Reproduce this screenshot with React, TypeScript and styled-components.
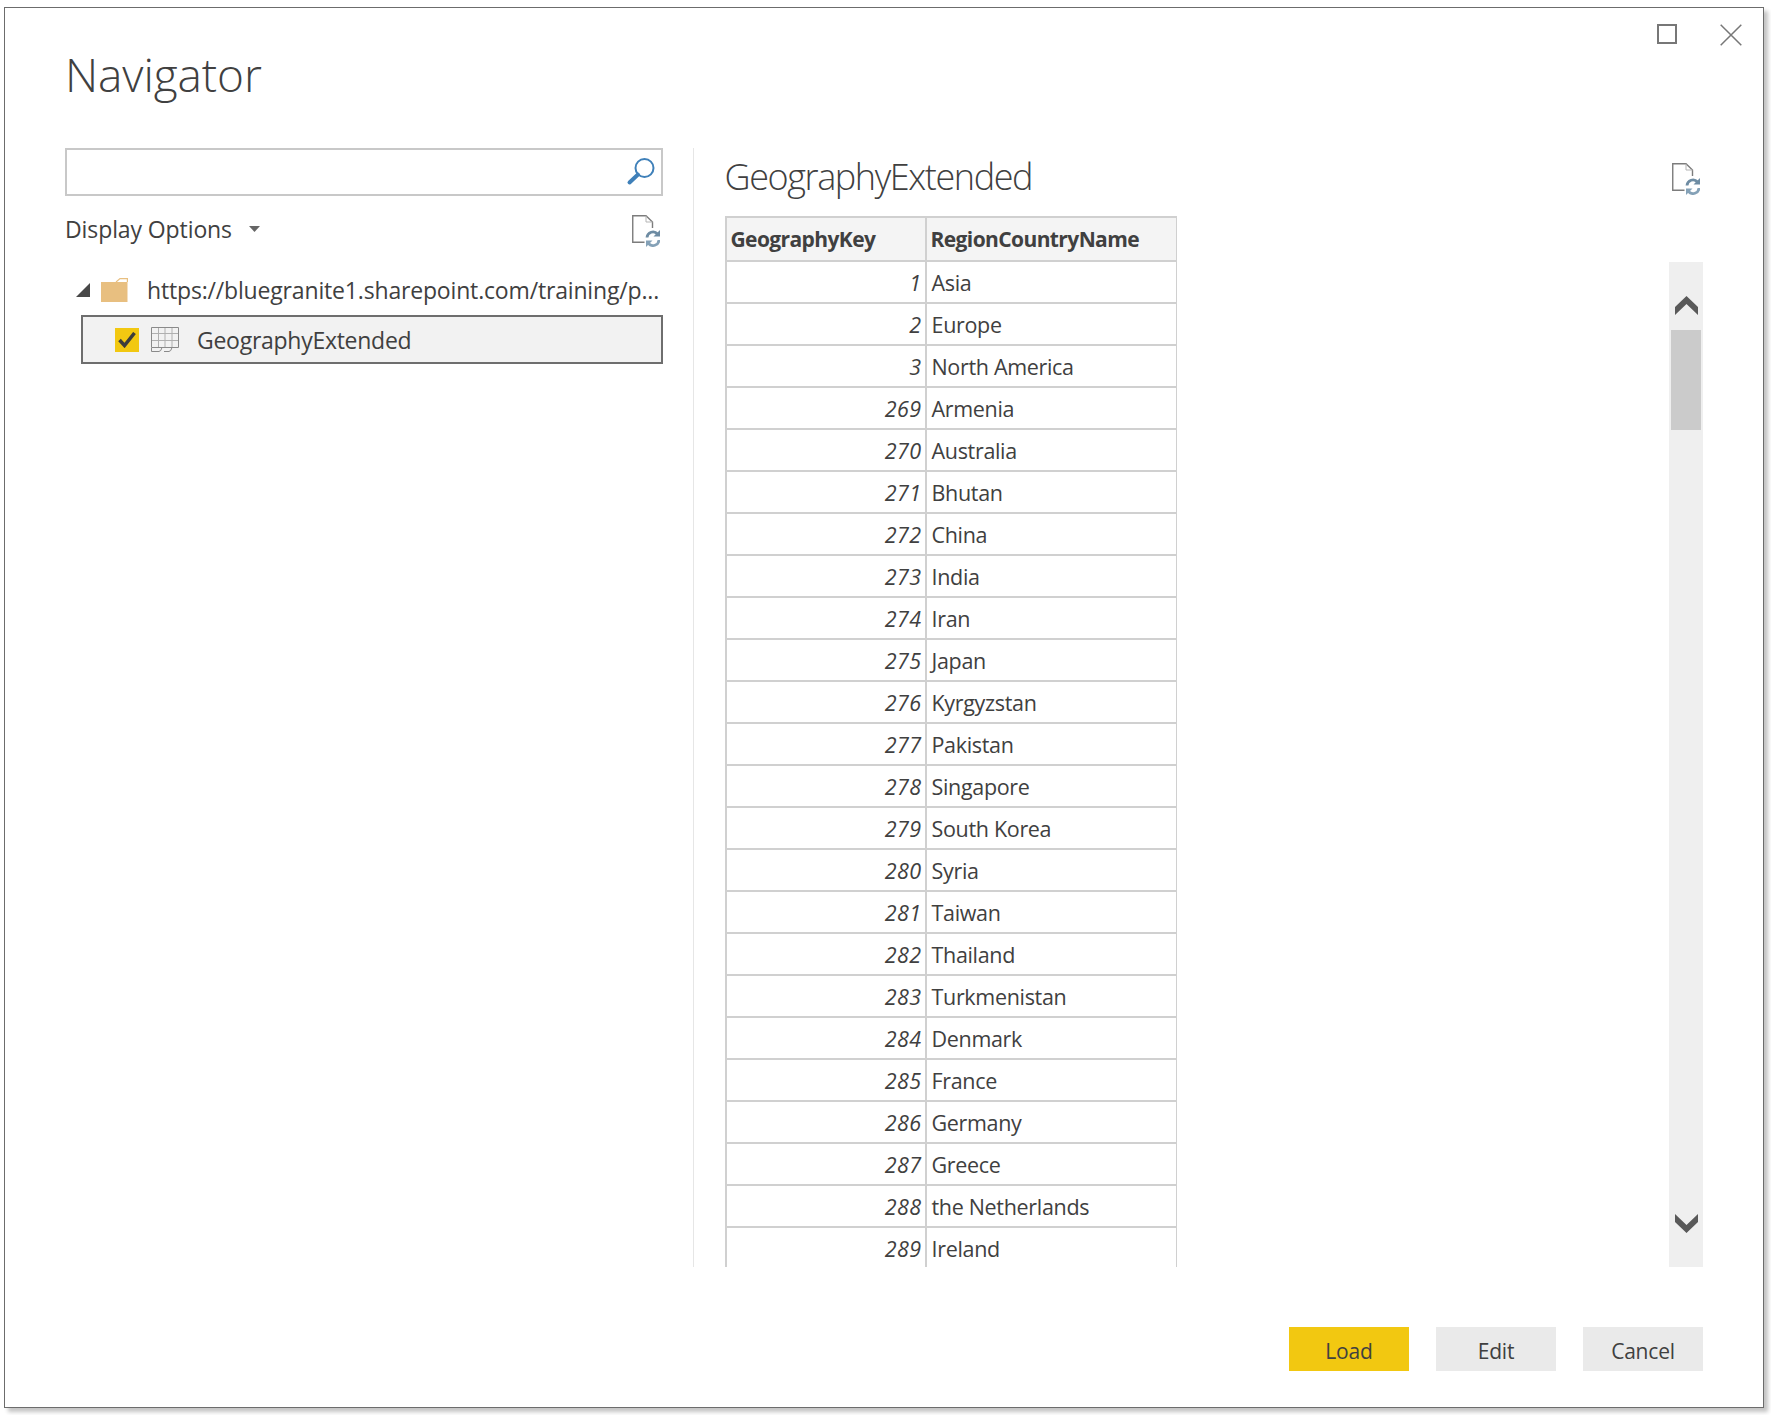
import React from 'react'
import styled, { createGlobalStyle } from 'styled-components'

const GlobalStyles = createGlobalStyle`
  html, body {
    margin: 0;
    padding: 0;
    background: #fff;
  }

  body {
    color: #404040;
    font-family: "Open Sans", "Noto Sans", "Liberation Sans", sans-serif;
  }
`

const Page = styled.div`
  box-sizing: border-box;
  height: 1415px;
  padding: 7px 0 0 4px;
  width: 1771px;
`

const Window = styled.div`
  background: #fff;
  border: 1.5px solid #6c6c6c;
  box-shadow: 4px 4px 4px #c4c4c4;
  box-sizing: border-box;
  display: flex;
  flex-direction: column;
  height: 1401px;
  padding: 0 60px;
  width: 1760px;
`

const Header = styled.header`
  display: flex;
  flex: none;
  height: 139.5px;
  justify-content: space-between;
  margin-right: -60px;
`

const Title = styled.h1`
  font-size: 46px;
  font-weight: 300;
  letter-spacing: -0.1px;
  line-height: 62px;
  margin: 35px 0 0;
`

const WindowControls = styled.div`
  align-items: flex-start;
  column-gap: 43px;
  display: flex;
  padding: 16px 21px 0 0;
`

const Body = styled.div`
  display: grid;
  flex: none;
  grid-template-columns: 598px minmax(0, 1fr);
  grid-template-rows: minmax(0, 1fr);
  height: 1119px;
`

const LeftPanel = styled.section`
  display: flex;
  flex-direction: column;
`

const SearchBox = styled.div`
  align-items: center;
  border: 2.5px solid #c8c8c8;
  box-sizing: border-box;
  display: flex;
  flex: none;
  height: 48px;
  justify-content: flex-end;
  padding-right: 5px;
`

const OptionsRow = styled.div`
  align-items: center;
  display: flex;
  height: 52px;
  justify-content: space-between;
  margin-top: 9px;
  padding-right: 3px;
`

const DisplayOptions = styled.div`
  align-items: center;
  column-gap: 17px;
  display: flex;
  font-size: 23px;
  letter-spacing: -0.1px;
  padding-bottom: 4px;
`

const TreeRoot = styled.div`
  align-items: center;
  column-gap: 11px;
  display: flex;
  font-size: 23px;
  height: 44px;
  letter-spacing: -0.17px;
  margin-top: 11.5px;
  padding-left: 11px;
  white-space: nowrap;
`

const FolderLabel = styled.span`
  margin-left: 8px;
`

const TreeItem = styled.div`
  align-items: center;
  background: #f2f2f2;
  border: 2.5px solid #6e6e6e;
  box-sizing: border-box;
  display: flex;
  font-size: 23px;
  height: 49px;
  letter-spacing: -0.27px;
  margin: 3px 0 0 16px;
  padding-left: 31.5px;
`

const CheckBox = styled.span`
  align-items: center;
  background: #f2c811;
  display: flex;
  flex: none;
  height: 24px;
  justify-content: center;
  width: 24px;
`

const ItemIcon = styled.span`
  display: flex;
  margin-left: 12.5px;
`

const ItemLabel = styled.span`
  margin-left: 18px;
`

const RightPanel = styled.section`
  border-left: 1.5px solid #e6e6e6;
  display: flex;
  flex-direction: column;
  margin-left: 30px;
  min-height: 0;
  padding-left: 30.5px;
`

const PreviewHeader = styled.div`
  align-items: flex-start;
  display: flex;
  flex: none;
  height: 68px;
  justify-content: space-between;
  padding-right: 3px;
`

const PreviewTitle = styled.h2`
  font-size: 36px;
  font-weight: 300;
  letter-spacing: -1.4px;
  line-height: 50px;
  margin: 4px 0 0;
`

const RefreshSlot = styled.div`
  padding-top: 15px;
`

const PreviewBody = styled.div`
  display: flex;
  flex: 1;
  justify-content: space-between;
  min-height: 0;
`

const TableViewport = styled.div`
  height: 100%;
  overflow: hidden;
  width: 452px;
`

const DataTable = styled.table`
  border: 2px solid #d0d0d0;
  border-collapse: collapse;
  font-size: 21.5px;
  table-layout: fixed;
  width: 451px;
`

const HeadCell = styled.th`
  background: #f4f4f4;
  border: 2px solid #d0d0d0;
  font-size: 21px;
  font-weight: 700;
  height: 42px;
  letter-spacing: -0.6px;
  overflow: hidden;
  padding: 0 4px;
  text-align: left;
  white-space: nowrap;
`

const KeyCell = styled.td`
  border: 2px solid #d0d0d0;
  font-style: italic;
  height: 38px;
  letter-spacing: 0.4px;
  padding: 2px 3px 0 5px;
  text-align: right;
`

const NameCell = styled.td`
  border: 2px solid #d0d0d0;
  letter-spacing: -0.32px;
  padding: 2px 5px 0;
  white-space: nowrap;
`

const Scrollbar = styled.div`
  align-items: center;
  background: #efefef;
  display: flex;
  flex-direction: column;
  margin-top: 46px;
  padding-top: 34px;
  width: 34px;
`

const ScrollThumb = styled.div`
  background: #cbcbcb;
  height: 100px;
  margin-top: 15px;
  width: 30px;
`

const ScrollDown = styled.div`
  display: flex;
  margin-bottom: 34px;
  margin-top: auto;
`

const Footer = styled.footer`
  column-gap: 27px;
  display: flex;
  justify-content: flex-end;
  margin-top: 60.5px;
`

const Button = styled.button<{ $primary?: boolean }>`
  background: ${({ $primary }) => ($primary ? '#f2c811' : '#eaeaea')};
  border: 0;
  color: #404040;
  font-family: inherit;
  font-size: 21px;
  height: 44px;
  letter-spacing: -0.2px;
  padding: 3px 0 0;
  width: 120px;
`

const rows: [number, string][] = [
  [1, 'Asia'],
  [2, 'Europe'],
  [3, 'North America'],
  [269, 'Armenia'],
  [270, 'Australia'],
  [271, 'Bhutan'],
  [272, 'China'],
  [273, 'India'],
  [274, 'Iran'],
  [275, 'Japan'],
  [276, 'Kyrgyzstan'],
  [277, 'Pakistan'],
  [278, 'Singapore'],
  [279, 'South Korea'],
  [280, 'Syria'],
  [281, 'Taiwan'],
  [282, 'Thailand'],
  [283, 'Turkmenistan'],
  [284, 'Denmark'],
  [285, 'France'],
  [286, 'Germany'],
  [287, 'Greece'],
  [288, 'the Netherlands'],
  [289, 'Ireland'],
]

const RefreshFileIcon = () => (
  <svg width="28" height="32" viewBox="0 0 28 32" fill="none">
    <path d="M20.5 13V7L14 .75H.75V27.25H12.5" stroke="#7c7c7c" strokeWidth="1.4" />
    <path d="M14 .75V7H20.5" stroke="#b5b5b5" strokeWidth="1" />
    <path d="M15 22.5a6 6 0 0 1 10.5-3.5" stroke="#6e8ca3" strokeWidth="2.8" />
    <path d="M28 15V21.5H21.5Z" fill="#6e8ca3" />
    <path d="M27 25a6 6 0 0 1-10.5 3.5" stroke="#84a1b7" strokeWidth="2.8" />
    <path d="M14 32V25.5H20.5Z" fill="#84a1b7" />
  </svg>
)

const SearchIcon = () => (
  <svg width="30" height="30" viewBox="0 0 30 30" fill="none">
    <circle cx="18.5" cy="11" r="9" stroke="#3f80b9" strokeWidth="2" />
    <path d="M12 17.5L3.5 25.5" stroke="#3f80b9" strokeWidth="4" strokeLinecap="round" />
  </svg>
)

const CaretIcon = () => (
  <svg width="11" height="6" viewBox="0 0 11 6">
    <path d="M0 0H11L5.5 6Z" fill="#666" />
  </svg>
)

const ExpandedIcon = () => (
  <svg width="14" height="14" viewBox="0 0 14 14">
    <path d="M0 14L14 0V14Z" fill="#484848" />
  </svg>
)

const FolderIcon = () => (
  <svg width="27" height="24" viewBox="0 0 27 24" fill="none">
    <path d="M0 4H16L26.5 4V24H0Z" fill="#e8bf80" />
    <path d="M15 4L19 .6H26.4V4" stroke="#e8bf80" strokeWidth="1.2" />
  </svg>
)

const TableIcon = () => (
  <svg width="28" height="25" viewBox="0 0 28 25" fill="none">
    <path d="M.5 6.5H27.5M.5 13.5H27.5M7.5 .5V20M14 .5V20M21 .5V20" stroke="#b0b0b0" />
    <path d="M.5 20V.5H27.5V20.5H.5V24.5H8Q10 24.5 11 20.5M13 24.5H18Q20 24.5 21 20.5" stroke="#8a8a8a" />
  </svg>
)

const CheckIcon = () => (
  <svg width="18" height="16" viewBox="0 0 18 16" fill="none">
    <path d="M1.5 8L6.5 13.5L16.5 1" stroke="#3c3c3c" strokeWidth="3.5" />
  </svg>
)

const MaximizeIcon = () => (
  <svg width="20" height="20" viewBox="0 0 20 20" fill="none">
    <rect x="1" y="1" width="18" height="18" stroke="#777" strokeWidth="2" />
  </svg>
)

const CloseIcon = () => (
  <svg width="22" height="22" viewBox="0 0 22 22" fill="none">
    <path d="M.7 .7L21.3 21.3M21.3 .7L.7 21.3" stroke="#777" strokeWidth="1.5" />
  </svg>
)

const ChevronIcon = ({ down }: { down?: boolean }) => (
  <svg width="23" height="19" viewBox="0 0 23 19">
    <path
      d={down ? 'M0 0L11.5 11L23 0V8L11.5 19L0 8Z' : 'M0 19L11.5 8L23 19V11L11.5 0L0 11Z'}
      fill="#595959"
    />
  </svg>
)

const App = () => {
  return (
    <>
      <GlobalStyles />
      <Page>
        <Window>
          <Header>
            <Title>Navigator</Title>
            <WindowControls>
              <MaximizeIcon />
              <CloseIcon />
            </WindowControls>
          </Header>
          <Body>
            <LeftPanel>
              <SearchBox>
                <SearchIcon />
              </SearchBox>
              <OptionsRow>
                <DisplayOptions>
                  Display Options
                  <CaretIcon />
                </DisplayOptions>
                <RefreshFileIcon />
              </OptionsRow>
              <TreeRoot>
                <ExpandedIcon />
                <FolderIcon />
                <FolderLabel>https://bluegranite1.sharepoint.com/training/p...</FolderLabel>
              </TreeRoot>
              <TreeItem>
                <CheckBox>
                  <CheckIcon />
                </CheckBox>
                <ItemIcon>
                  <TableIcon />
                </ItemIcon>
                <ItemLabel>GeographyExtended</ItemLabel>
              </TreeItem>
            </LeftPanel>
            <RightPanel>
              <PreviewHeader>
                <PreviewTitle>GeographyExtended</PreviewTitle>
                <RefreshSlot>
                  <RefreshFileIcon />
                </RefreshSlot>
              </PreviewHeader>
              <PreviewBody>
                <TableViewport>
                  <DataTable>
                    <colgroup>
                      <col width="200" />
                      <col width="251" />
                    </colgroup>
                    <thead>
                      <tr>
                        <HeadCell>GeographyKey</HeadCell>
                        <HeadCell>RegionCountryName</HeadCell>
                      </tr>
                    </thead>
                    <tbody>
                      {rows.map(([key, name]) => (
                        <tr key={key}>
                          <KeyCell>{key}</KeyCell>
                          <NameCell>{name}</NameCell>
                        </tr>
                      ))}
                    </tbody>
                  </DataTable>
                </TableViewport>
                <Scrollbar>
                  <ChevronIcon />
                  <ScrollThumb />
                  <ScrollDown>
                    <ChevronIcon down />
                  </ScrollDown>
                </Scrollbar>
              </PreviewBody>
            </RightPanel>
          </Body>
          <Footer>
            <Button $primary>Load</Button>
            <Button>Edit</Button>
            <Button>Cancel</Button>
          </Footer>
        </Window>
      </Page>
    </>
  )
}

export default App
